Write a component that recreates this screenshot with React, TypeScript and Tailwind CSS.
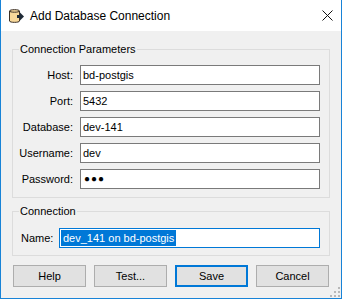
import React from "react";

const rows = [
  { label: "Host:", value: "bd-postgis" },
  { label: "Port:", value: "5432" },
  { label: "Database:", value: "dev-141" },
  { label: "Username:", value: "dev" },
];

const DbIcon = () => (
  <svg width="17" height="16" viewBox="0 0 17 16">
    <path
      d="M1.5 3 C1.5 1.2 11.5 1.2 11.5 3 L11.5 13 C11.5 14.8 1.5 14.8 1.5 13 Z"
      fill="#f8d89a"
      stroke="#3b3026"
      strokeWidth="1"
    />
    <path d="M1.5 3 C1.5 4.6 11.5 4.6 11.5 3" fill="none" stroke="#3b3026" strokeWidth="1" />
    <path d="M9 7 H12 V4.5 L16 8.5 L12 12.5 V10 H9 Z" fill="#1f2a36" />
  </svg>
);

const CloseIcon = () => (
  <svg width="11" height="11" viewBox="0 0 11 11">
    <path d="M0.5 0.5 L10.5 10.5 M10.5 0.5 L0.5 10.5" stroke="#111" strokeWidth="1" />
  </svg>
);

const Grip = () => (
  <svg width="10" height="10" viewBox="0 0 10 10">
    {[
      [8, 0],
      [8, 4],
      [4, 4],
      [8, 8],
      [4, 8],
      [0, 8],
    ].map(([x, y], i) => (
      <rect key={i} x={x} y={y} width="2" height="2" fill="#b8b8b8" />
    ))}
  </svg>
);

const Field = ({ children }: { children: React.ReactNode }) => (
  <div className="h-[20px] border border-[#7a7a7a] bg-white px-[2px] flex items-center leading-none text-black">
    {children}
  </div>
);

export default function App() {
  return (
    <div className="relative w-[342px] h-[299px] flex flex-col border-x border-b border-[#1883d7] bg-[#f0f0f0] font-['Liberation_Sans',Arial,sans-serif] text-[11px] text-black">
      {/* title bar */}
      <div className="h-[31px] bg-white flex items-center pl-[7px] pr-[8px] text-[12px]">
        <DbIcon />
        <span className="ml-[5px] flex-1">Add Database Connection</span>
        <CloseIcon />
      </div>

      {/* body */}
      <div className="flex-1 px-[11px] pt-[11px]">
        <fieldset className="border border-[#dcdcdc] pr-[9px] pb-[8px] pt-[9px]">
          <legend className="ml-[6px] px-[1px] leading-[14px]">Connection Parameters</legend>
          <div className="grid grid-cols-[60px_240px] gap-x-[7px] gap-y-[6px] items-center">
            {rows.map((r) => (
              <React.Fragment key={r.label}>
                <div className="text-right">{r.label}</div>
                <Field>{r.value}</Field>
              </React.Fragment>
            ))}
            <div className="text-right">Password:</div>
            <Field>
              <span className="pl-[1px] text-[10px] tracking-[1px]">●●●</span>
            </Field>
          </div>
        </fieldset>

        <fieldset className="mt-[6px] border border-[#dcdcdc] pl-[8px] pr-[9px] pt-[10px] pb-[7px]">
          <legend className="-ml-[2px] px-[1px] leading-[14px]">Connection</legend>
          <div className="flex items-center">
            <div className="w-[38px]">Name:</div>
            <div className="h-[20px] flex-1 border border-[#0078d7] bg-white px-[1px] flex items-center">
              <span className="bg-[#0078d7] text-white h-[16px] flex items-center px-[2px]">
                dev_141 on bd-postgis
              </span>
            </div>
          </div>
        </fieldset>

        <div className="mt-[9px] pl-[1px] flex gap-[8px]">
          <button className="w-[73px] h-[22px] border border-[#adadad] bg-[#e1e1e1]">Help</button>
          <button className="w-[73px] h-[22px] border border-[#adadad] bg-[#e1e1e1]">Test...</button>
          <button className="w-[73px] h-[22px] border-2 border-[#0078d7] bg-[#e1e1e1]">Save</button>
          <button className="w-[73px] h-[22px] border border-[#adadad] bg-[#e1e1e1]">Cancel</button>
        </div>
      </div>

      <div className="absolute right-[1px] bottom-[1px]">
        <Grip />
      </div>
    </div>
  );
}
